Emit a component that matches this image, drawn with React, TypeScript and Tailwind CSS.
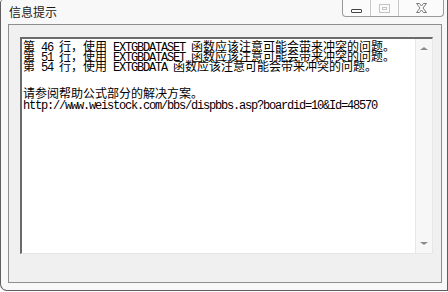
import React from "react";

const LINES: { text: string; h: string }[] = [
  { text: "第 46 行，使用 EXTGBDATASET 函数应该注意可能会带来冲突的问题。", h: "h-[10px]" },
  { text: "第 51 行，使用 EXTGBDATASET 函数应该注意可能会带来冲突的问题。", h: "h-[10px]" },
  { text: "第 54 行，使用 EXTGBDATA 函数应该注意可能会带来冲突的问题。", h: "h-[27px]" },
  { text: "请参阅帮助公式部分的解决方案。", h: "h-[11px]" },
  { text: "http://www.weistock.com/bbs/dispbbs.asp?boardid=10&Id=48570", h: "h-[11px]" },
];

// split a line into ascii / cjk runs so each gets its own font
function runs(s: string) {
  const out: { ascii: boolean; t: string }[] = [];
  for (const ch of s) {
    const ascii = ch.charCodeAt(0) < 128;
    const last = out[out.length - 1];
    if (last && last.ascii === ascii) last.t += ch;
    else out.push({ ascii, t: ch });
  }
  return out;
}

function Line({ text, h }: { text: string; h: string }) {
  return (
    <div className={`${h} whitespace-pre leading-[10px] text-black`}>
      {runs(text).map((r, i) =>
        r.ascii ? (
          <span key={i} className="font-['Liberation_Mono',monospace] text-[12px] leading-[10px] tracking-[-1.2px]">
            {r.t}
          </span>
        ) : (
          <span key={i} className="font-['Noto_Sans_CJK_SC',sans-serif] text-[12px] leading-[10px]">
            {r.t}
          </span>
        )
      )}
    </div>
  );
}

export default function App() {
  return (
    <div className="h-[292px] w-[448px] overflow-hidden bg-white">
      <div className="flex h-[291px] w-[448px] flex-col rounded-bl-[7px] rounded-tl-[3px] border-b border-l border-r border-[#5e5e5e] bg-[#f8f8f8]">
        {/* title bar */}
        <div className="flex h-[24px] items-start">
          <div className="pl-[8px] pt-[4px] font-['Noto_Sans_CJK_SC',sans-serif] text-[12px] leading-[16px] text-[#1a1a1a]">
            信息提示
          </div>
          <div className="ml-auto mr-[3px] flex h-[17px] rounded-b-[4px] border border-t-0 border-[#9a9a9a] bg-[#fbfbfb]">
            <div className="flex w-[28px] items-center justify-center border-r border-[#c8c8c8]">
              <div className="mt-[5px] h-[4px] w-[11px] rounded-[1px] border border-[#444]" />
            </div>
            <div className="flex w-[28px] items-center justify-center border-r border-[#c8c8c8]">
              <div className="flex h-[9px] w-[11px] items-center justify-center border border-[#c4c4c4]">
                <div className="h-[3px] w-[5px] border border-[#c4c4c4]" />
              </div>
            </div>
            <div className="flex w-[44px] items-center justify-center">
              <svg width="13" height="10" viewBox="0 0 13 10">
                <path
                  d="M1.5 0.5h3l2 2.5 2-2.5h3l-3.5 4.5 3.5 4.5h-3l-2-2.5-2 2.5h-3l3.5-4.5z"
                  fill="#fdfdfd"
                  stroke="#7a7a7a"
                  strokeWidth="1"
                />
              </svg>
            </div>
          </div>
        </div>
        {/* client area */}
        <div className="ml-[7px] mr-[5px] h-[259px] border border-[#8e8e8e] bg-[#f0f0f0] pl-[11px] pt-[12px]">
          <div className="flex h-[217px] w-[413px] border-b border-l-2 border-r border-t-2 border-b-[#e6e6e6] border-l-[#6a6a6a] border-r-[#e6e6e6] border-t-[#6a6a6a] bg-white">
            <div className="flex-1 pl-[1px] pt-[1px]">
              {LINES.map((l, i) => (
                <Line key={i} text={l.text} h={l.h} />
              ))}
            </div>
            <div className="flex w-[17px] flex-col items-center justify-between border-l border-[#e8e8e8] bg-[#f7f7f7] py-[8px]">
              <div className="h-0 w-0 border-x-[4px] border-b-[3px] border-x-transparent border-b-[#8a8a8a]" />
              <div className="h-0 w-0 border-x-[4px] border-t-[3px] border-x-transparent border-t-[#8a8a8a]" />
            </div>
          </div>
        </div>
      </div>
    </div>
  );
}
